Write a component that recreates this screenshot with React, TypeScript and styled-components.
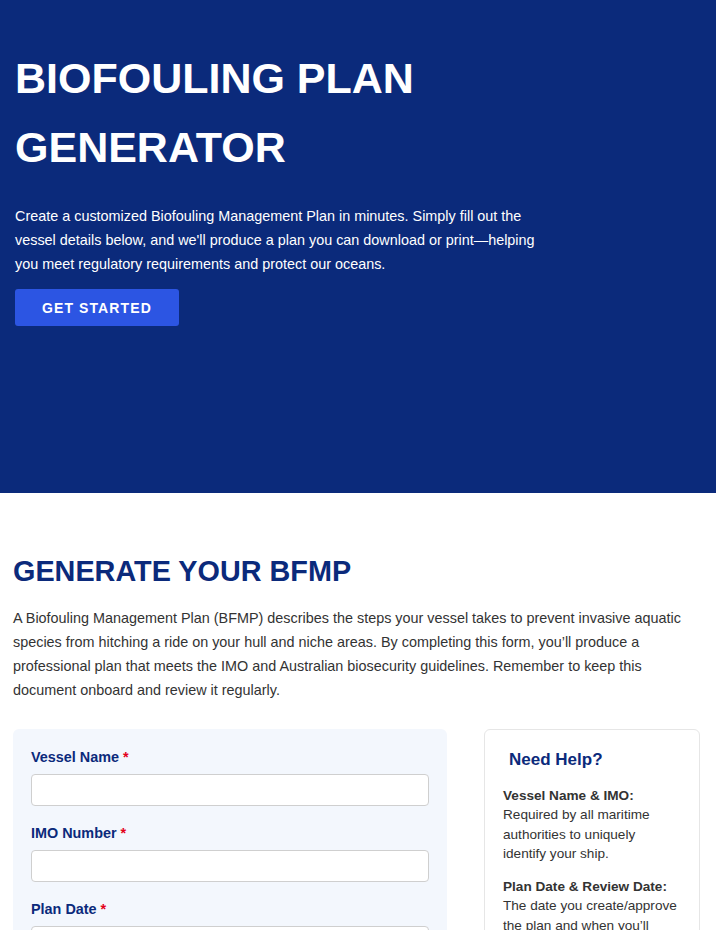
import React from "react";
import styled, { createGlobalStyle } from "styled-components";

const GlobalStyle = createGlobalStyle`
	body {
		margin: 0;
		font-family: "Liberation Sans", Arial, sans-serif;
		background: #fff;
	}
	* { box-sizing: border-box; }
`;

type Field = { label: string; type?: string };
type HelpItem = { title: string; text: string };

const fields: Field[] = [
	{ label: "Vessel Name" },
	{ label: "IMO Number" },
	{ label: "Plan Date", type: "date" },
	{ label: "Review Date", type: "date" },
];

const helpItems: HelpItem[] = [
	{ title: "Vessel Name & IMO:", text: "Required by all maritime authorities to uniquely identify your ship." },
	{ title: "Plan Date & Review Date:", text: "The date you create/approve the plan and when you\u2019ll next review it." },
];

const App = (): JSX.Element => {
	return (
		<>
			<GlobalStyle />
			<Hero>
				<HeroTitle>BIOFOULING PLAN GENERATOR</HeroTitle>
				<HeroText>
					Create a customized Biofouling Management Plan in minutes. Simply fill out the vessel details below, and
					we'll produce a plan you can download or print—helping you meet regulatory requirements and protect our
					oceans.
				</HeroText>
				<PrimaryButton>GET STARTED</PrimaryButton>
			</Hero>
			<Section>
				<SectionTitle>GENERATE YOUR BFMP</SectionTitle>
				<SectionText>
					A Biofouling Management Plan (BFMP) describes the steps your vessel takes to prevent invasive aquatic
					species from hitching a ride on your hull and niche areas. By completing this form, you’ll produce a
					professional plan that meets the IMO and Australian biosecurity guidelines. Remember to keep this document
					onboard and review it regularly.
				</SectionText>
				<Columns>
					<FormCard>
						{fields.map((f) => (
							<FieldGroup key={f.label}>
								<Label>
									{f.label} <Req>*</Req>
								</Label>
								<Input type="text" />
							</FieldGroup>
						))}
					</FormCard>
					<HelpCard>
						<HelpTitle>Need Help?</HelpTitle>
						{helpItems.map((h) => (
							<HelpPara key={h.title}>
								<strong>{h.title}</strong>
								<br />
								{h.text}
							</HelpPara>
						))}
					</HelpCard>
				</Columns>
			</Section>
		</>
	);
};

export default App;

const Hero = styled.header`
	background: #0b2a7b;
	color: #fff;
	padding: 44px 15px 167px;
`;

const HeroTitle = styled.h1`
	margin: 0 0 22px;
	max-width: 560px;
	font-size: 43px;
	line-height: 69px;
	font-weight: 700;
`;

const HeroText = styled.p`
	margin: 0 0 13px;
	max-width: 540px;
	font-size: 14.4px;
	line-height: 24px;
`;

const PrimaryButton = styled.button`
	display: inline-block;
	height: 37px;
	padding: 0 27px;
	border: none;
	border-radius: 3px;
	background: #2c55e3;
	color: #fff;
	font-family: "Liberation Sans", Arial, sans-serif;
	font-size: 14px;
	font-weight: 700;
	letter-spacing: 1.1px;
	cursor: pointer;
`;

const Section = styled.section`
	padding: 61px 16px 40px 13px;
`;

const SectionTitle = styled.h2`
	margin: 0 0 17px;
	color: #0b2a7b;
	font-size: 28.8px;
	line-height: 1.2;
	font-weight: 700;
`;

const SectionText = styled.p`
	margin: 0 0 27px;
	color: #333;
	font-size: 14.4px;
	line-height: 24px;
`;

const Columns = styled.div`
	display: grid;
	grid-template-columns: 434px 1fr;
	gap: 37px;
	align-items: start;
`;

const FormCard = styled.div`
	background: #f3f7fd;
	border-radius: 6px;
	padding: 20px 18px;
`;

const FieldGroup = styled.div`
	margin-bottom: 19px;
`;

const Label = styled.label`
	display: block;
	margin-bottom: 8px;
	color: #0b2a7b;
	font-size: 14.4px;
	line-height: 1.2;
	font-weight: 700;
`;

const Req = styled.span`
	color: #e3001b;
`;

const Input = styled.input`
	display: block;
	width: 100%;
	height: 32px;
	border: 1px solid #cfcfcf;
	border-radius: 4px;
	background: #fff;
	padding: 0 8px;
	font-size: 14px;
`;

const HelpCard = styled.aside`
	background: #fff;
	border: 1px solid #e6e6e6;
	border-radius: 6px;
	padding: 20px 21px 20px 18px;
`;

const HelpTitle = styled.h3`
	margin: 0 0 16px 6px;
	color: #0b2a7b;
	font-size: 17px;
	line-height: 1.2;
	font-weight: 700;
`;

const HelpPara = styled.p`
	margin: 0 0 14px;
	color: #333;
	font-size: 13.6px;
	line-height: 1.42;

	strong {
		color: #333;
	}
`;
